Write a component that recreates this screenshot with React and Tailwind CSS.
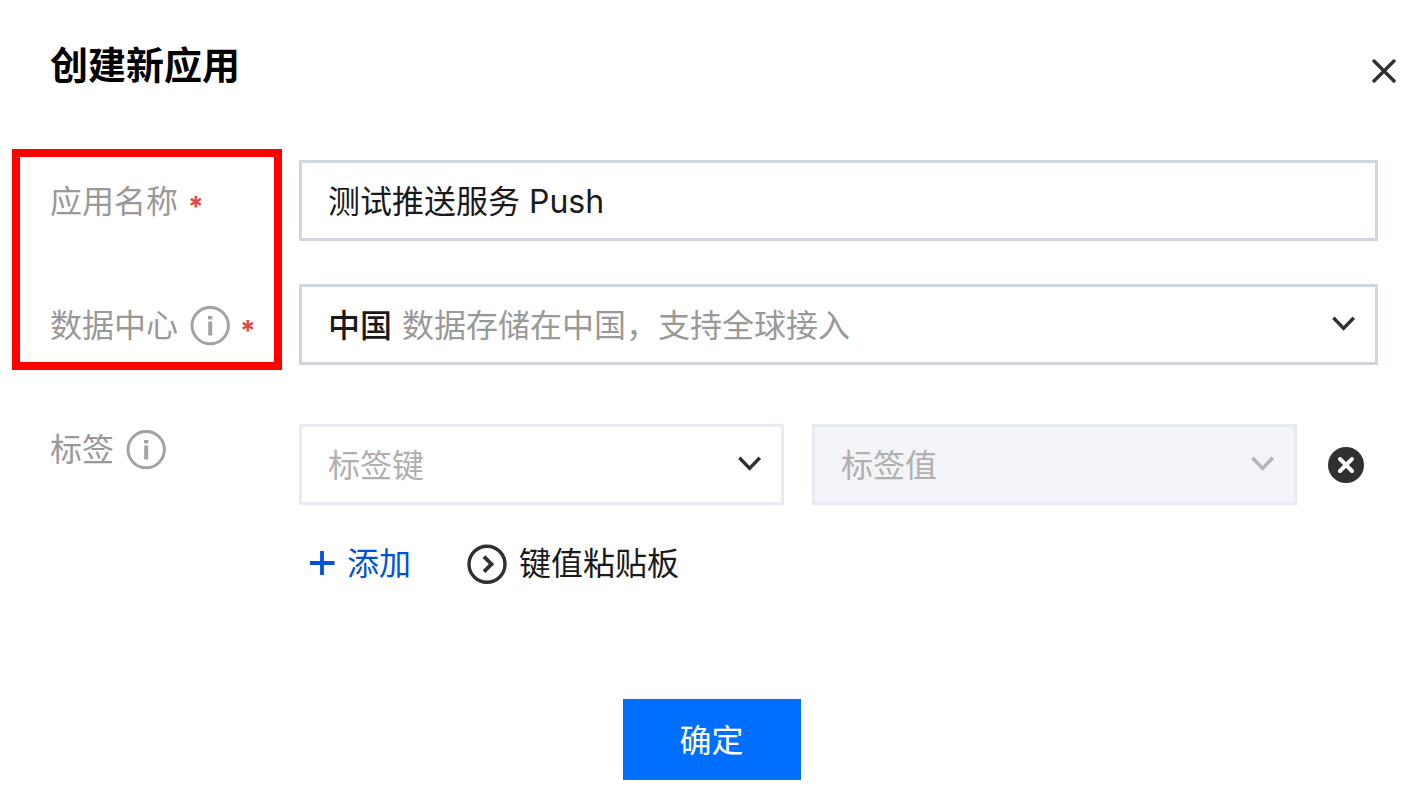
import React, { useState } from 'react';
import clsx from 'clsx';

const InfoIcon = () => (
  <svg width="40" height="40" viewBox="0 0 40 40" fill="none" className="shrink-0">
    <circle cx="20.2" cy="19.6" r="18.2" stroke="#a3a3a3" strokeWidth="3" />
    <path d="M20.2 15.5v14" stroke="#a3a3a3" strokeWidth="4" />
    <path d="M20.2 10v3.4" stroke="#a3a3a3" strokeWidth="4.4" />
  </svg>
);

const ChevronIcon = ({ className }) => (
  <svg
    width="24"
    height="24"
    viewBox="0 0 24 24"
    fill="none"
    stroke="currentColor"
    strokeWidth="3.4"
    className={className}
  >
    <path d="M1.4 5.8 11.6 16.4l10.2-10.6" />
  </svg>
);

const CloseIcon = () => (
  <svg width="24" height="24" viewBox="0 0 24 24" stroke="#303030" strokeWidth="3.4" strokeLinecap="round">
    <path d="M2 2l20 20M22 2 2 22" />
  </svg>
);

const RemoveIcon = () => (
  <svg width="36" height="36" viewBox="0 0 36 36">
    <circle cx="18" cy="18" r="18" fill="#303030" />
    <path d="M12 12l12 12M24 12l-12 12" stroke="#fff" strokeWidth="4" strokeLinecap="round" />
  </svg>
);

const PlusIcon = () => (
  <svg width="26" height="26" viewBox="0 0 26 26" stroke="currentColor" strokeWidth="3.8">
    <path d="M13 0v24M1 12h24.5" />
  </svg>
);

const PasteIcon = () => (
  <svg width="40" height="40" viewBox="0 0 40 40" fill="none" stroke="#303030" strokeWidth="3.4">
    <circle cx="20" cy="20.2" r="18" />
    <path d="M17 12.7l7.5 7.5-7.5 7.5" strokeWidth="3.8" />
  </svg>
);

const Label = ({ htmlFor, text, info, required }) => (
  <label htmlFor={htmlFor} className="flex h-[81px] w-[249px] shrink-0 items-center gap-3 pt-[3px] text-[#999]">
    <span>{text}</span>
    {info && <InfoIcon />}
    {required && <span className="-ml-[2px] pt-[10px] text-[28px] leading-8 font-bold text-[#e54545]">*</span>}
  </label>
);

const Select = ({ id, label, options, hint, placeholder, disabled }) => (
  <div className="relative min-w-0 flex-1">
    <select
      id={id}
      aria-label={label}
      disabled={disabled}
      className={clsx(
        'h-[81px] w-full appearance-none border-[3px] pt-[2px] pr-16 pl-[26px] opacity-100 outline-none',
        placeholder ? 'border-[#e7eaf1] text-[#b0b0b0]' : 'border-[#cfd6e0] font-medium text-[#1a1a1a]',
        disabled ? 'bg-[#f3f4f8]' : 'bg-white'
      )}
    >
      {options.map((option) => (
        <option key={option}>{option}</option>
      ))}
    </select>
    {hint && (
      <span className="pointer-events-none absolute inset-y-0 left-[103px] flex items-center pt-[2px] text-[#999]">
        {hint}
      </span>
    )}
    <ChevronIcon
      className={clsx(
        'pointer-events-none absolute top-7 right-[22px]',
        disabled ? 'text-[#b3b4b8]' : 'text-[#303030]'
      )}
    />
  </div>
);

const App = () => {
  const [name, setName] = useState('测试推送服务 Push');

  return (
    <div
      role="dialog"
      aria-labelledby="dialog-title"
      className="min-h-screen bg-white pl-[50px] font-['Inter','Noto_Sans_CJK_SC',sans-serif] text-[32px] leading-[48px] text-[#1a1a1a]"
    >
      <header className="flex items-end justify-between pt-[39px] pr-[6px]">
        <h1 id="dialog-title" className="text-[38px] font-bold leading-[52px] text-black">
          创建新应用
        </h1>
        <button type="button" aria-label="关闭" className="flex size-10 items-center justify-center">
          <CloseIcon />
        </button>
      </header>

      <form className="pt-[69px] pr-8" onSubmit={(e) => e.preventDefault()}>
        {/* Required fields */}
        <div className="relative flex flex-col gap-[43px]">
          <div className="pointer-events-none absolute -top-[11px] -bottom-[5px] -left-[38px] w-[270px] border-8 border-[#ff0000]" />
          <div className="flex">
            <Label htmlFor="app-name" text="应用名称" required />
            <input
              id="app-name"
              type="text"
              value={name}
              onChange={(e) => setName(e.target.value)}
              className="h-[81px] min-w-0 flex-1 border-[3px] border-[#cfd6e0] px-[26px] pb-1 outline-none"
            />
          </div>
          <div className="flex">
            <Label htmlFor="data-center" text="数据中心" info required />
            <Select id="data-center" options={['中国']} hint="数据存储在中国，支持全球接入" />
          </div>
        </div>

        {/* Tags */}
        <div className="flex pt-[43px]">
          <Label htmlFor="tag-key" text="标签" info />
          <div className="min-w-0 flex-1 pt-4">
            <div className="flex items-center pr-[14px]">
              <div className="flex min-w-0 flex-1 gap-7">
                <Select id="tag-key" options={['标签键']} placeholder />
                <Select id="tag-value" label="标签值" options={['标签值']} placeholder disabled />
              </div>
              <button type="button" aria-label="删除" className="ml-[31px]">
                <RemoveIcon />
              </button>
            </div>
            <div className="flex gap-14 pt-[35px] pl-[10px]">
              <button type="button" className="flex items-center gap-3 text-[#0052d9]">
                <PlusIcon />
                添加
              </button>
              <button type="button" className="flex items-center gap-3">
                <PasteIcon />
                键值粘贴板
              </button>
            </div>
          </div>
        </div>

        <div className="flex justify-center pt-[111px] pr-[5px]">
          <button type="submit" className="h-[81px] w-[178px] bg-[#006eff] pt-[2px] text-white">
            确定
          </button>
        </div>
      </form>
    </div>
  );
};

export default App;
